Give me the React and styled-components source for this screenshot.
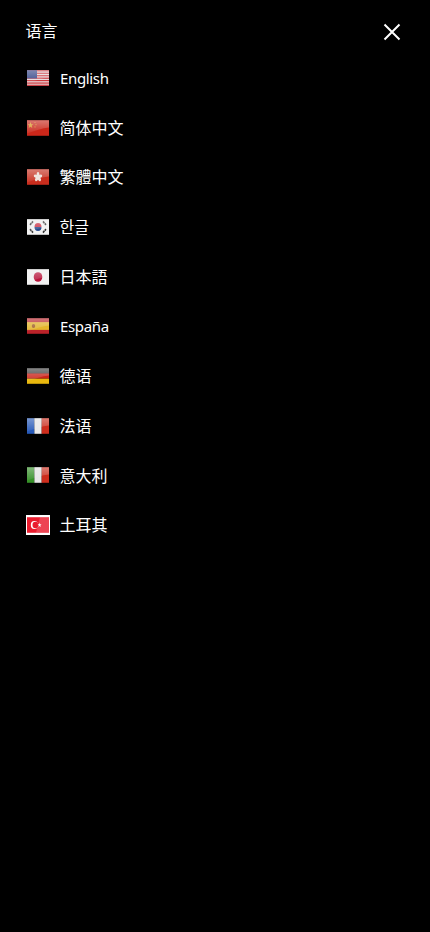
import React, { useId } from 'react';
import styled, { createGlobalStyle } from 'styled-components';

const GlobalStyle = createGlobalStyle`
  html, body {
    margin: 0;
    padding: 0;
    background: #000;
  }
  body {
    font-family: "Noto Sans", "Noto Sans CJK SC", sans-serif;
    color: #fff;
  }
`;

const Panel = styled.div`
  width: 430px;
  min-height: 932px;
  background: #000;
  padding-top: 16px;
  box-sizing: border-box;
`;

const Header = styled.div`
  display: flex;
  align-items: center;
  justify-content: space-between;
  height: 30px;
  padding: 0 29px 0 25.5px;
`;

const Title = styled.span`
  font-size: 16px;
  line-height: 30px;
  padding-bottom: 2px;
  font-family: "Noto Sans CJK SC", sans-serif;
`;

const CloseButton = styled.button`
  display: flex;
  padding: 2px 0 0;
  border: 0;
  background: none;
  cursor: pointer;
`;

const List = styled.ul`
  list-style: none;
  margin: 0;
  padding: 7px 0 0 26px;
`;

const Row = styled.li`
  display: flex;
  align-items: center;
  height: 49.7px;
`;

const FlagBox = styled.svg`
  width: 24px;
  height: 20px;
  flex: none;
  display: block;
  filter: blur(0.4px);
`;

const Label = styled.span`
  line-height: 24px;
  font-family: ${p => p.$font || '"Noto Sans"'}, "Noto Sans CJK SC", sans-serif;
  margin-left: ${p => (p.$font ? '9.5px' : '10px')};
  font-size: ${p => (p.$font ? '16px' : '15px')};
  letter-spacing: ${p => (p.$font ? '0' : '-0.35px')};
  padding-bottom: ${p => (p.$font ? '1.5px' : '0')};
`;

const Gloss = () => {
  const id = useId();
  return (
    <>
      <defs>
        <linearGradient id={id} x1="0" y1="0" x2="0" y2="1">
          <stop offset="0" stopColor="#fff" stopOpacity=".4" />
          <stop offset="1" stopColor="#fff" stopOpacity=".05" />
        </linearGradient>
      </defs>
      <path d="M1 2h22v6.5c-7 .5-14 3-22 5.5z" fill={`url(#${id})`} />
      <rect x="1" y="2" width="22" height="14" fill="#000" opacity=".05" />
    </>
  );
};

const Usa = () => (
  <>
    <rect x="1" y="2" width="22" height="14" fill="#f4e8ea" />
    {[2, 4.2, 6.4, 8.6, 10.8, 13, 15].map(y => (
      <rect key={y} x="1" y={y} width="22" height="1.1" fill="#d8393f" />
    ))}
    <rect x="1" y="2" width="10" height="7.4" fill="#34478f" />
  </>
);

const China = () => (
  <>
    <rect x="1" y="2" width="22" height="14" fill="#d62a1c" />
    <path d="M4.5 3.6l.8 2 2 .1-1.6 1.3.6 2-1.8-1.2-1.8 1.2.6-2-1.6-1.3 2-.1z" fill="#eaa72c" />
    <circle cx="9" cy="4" r=".5" fill="#eaa72c" />
    <circle cx="10" cy="6" r=".5" fill="#eaa72c" />
    <circle cx="9" cy="8" r=".5" fill="#eaa72c" />
  </>
);

const HongKong = () => (
  <>
    <rect x="1" y="2" width="22" height="14" fill="#d4301f" />
    {[0, 72, 144, 216, 288].map(a => (
      <ellipse key={a} cx="12" cy="6.8" rx="1.4" ry="2.2" fill="#fbeee8" transform={`rotate(${a} 12 9)`} />
    ))}
  </>
);

const Korea = () => (
  <>
    <rect x="1" y="2" width="22" height="14" fill="#fff" />
    <path d="M8.5 9a3.5 3.5 0 0 1 7 0z" fill="#d8354a" />
    <path d="M8.5 9a3.5 3.5 0 0 0 7 0z" fill="#2a4f94" />
    <g stroke="#333" strokeWidth="1.6" strokeDasharray="2 .5">
      <path d="M4 7l3-3" />
      <path d="M17 4l3 3" />
      <path d="M4 11l3 3" />
      <path d="M17 14l3-3" />
    </g>
  </>
);

const Japan = () => (
  <>
    <rect x="1" y="2" width="22" height="14" fill="#fff" />
    <circle cx="12" cy="9" r="4.3" fill="#c4163f" />
  </>
);

const Spain = () => (
  <>
    <rect x="1" y="2" width="22" height="14" fill="#c5242c" />
    <rect x="1" y="5.5" width="22" height="7" fill="#f0bf2f" />
    <circle cx="7.5" cy="9" r="1.7" fill="#a9622a" />
  </>
);

const Germany = () => (
  <>
    <rect x="1" y="2" width="22" height="5" fill="#444" />
    <rect x="1" y="6.7" width="22" height="4.7" fill="#d8261c" />
    <rect x="1" y="11.4" width="22" height="4.6" fill="#f6c20f" />
  </>
);

const France = () => (
  <>
    <rect x="1" y="2" width="7.4" height="14" fill="#2a5fc4" />
    <rect x="8.4" y="2" width="7.3" height="14" fill="#f7f7f7" />
    <rect x="15.7" y="2" width="7.3" height="14" fill="#d8301f" />
  </>
);

const Italy = () => (
  <>
    <rect x="1" y="2" width="7.4" height="14" fill="#3a9a2c" />
    <rect x="8.4" y="2" width="7.3" height="14" fill="#f4f4f4" />
    <rect x="15.7" y="2" width="7.3" height="14" fill="#d8301f" />
  </>
);

const Turkey = () => (
  <>
    <rect x="0" y="0" width="24" height="18" fill="#fff" />
    <rect x="1" y="2" width="22" height="14" fill="#ea1c2e" />
    <path d="M14 2h9v14H10z" fill="#fff" opacity=".18" />
    <circle cx="8.4" cy="9" r="3.6" fill="#fff" />
    <circle cx="9.4" cy="9" r="2.9" fill="#ea1c2e" />
    <path d="M13.6 7l.5 1.4 1.5 0-1.2.9.4 1.4-1.2-.8-1.2.8.4-1.4-1.2-.9 1.5 0z" fill="#fff" />
  </>
);

const languages = [
  { name: 'English', flag: Usa },
  { name: '简体中文', flag: China, font: '"Noto Sans CJK SC"', lang: 'zh-CN' },
  { name: '繁體中文', flag: HongKong, font: '"Noto Sans CJK TC"', lang: 'zh-TW' },
  { name: '한글', flag: Korea, font: '"Noto Sans CJK KR"', lang: 'ko' },
  { name: '日本語', flag: Japan, font: '"Noto Sans CJK JP"', lang: 'ja' },
  { name: 'España', flag: Spain },
  { name: '德语', flag: Germany, font: '"Noto Sans CJK SC"', lang: 'zh-CN' },
  { name: '法语', flag: France, font: '"Noto Sans CJK SC"', lang: 'zh-CN' },
  { name: '意大利', flag: Italy, font: '"Noto Sans CJK SC"', lang: 'zh-CN' },
  { name: '土耳其', flag: Turkey, font: '"Noto Sans CJK SC"', lang: 'zh-CN' },
];

export default function App() {
  return (
    <Panel>
      <GlobalStyle />
      <Header>
        <Title lang="zh-CN">语言</Title>
        <CloseButton aria-label="close">
          <svg width="18" height="18" viewBox="0 0 18 18">
            <path d="M1.5 1.5l15 15M16.5 1.5l-15 15" stroke="#fff" strokeWidth="2" fill="none" />
          </svg>
        </CloseButton>
      </Header>
      <List>
        {languages.map(({ name, flag: Flag, font, lang }) => (
          <Row key={name}>
            <FlagBox viewBox="0 0 24 18" preserveAspectRatio="none">
              <Flag />
              {Flag !== Turkey && <Gloss />}
            </FlagBox>
            <Label $font={font} lang={lang}>{name}</Label>
          </Row>
        ))}
      </List>
    </Panel>
  );
}
